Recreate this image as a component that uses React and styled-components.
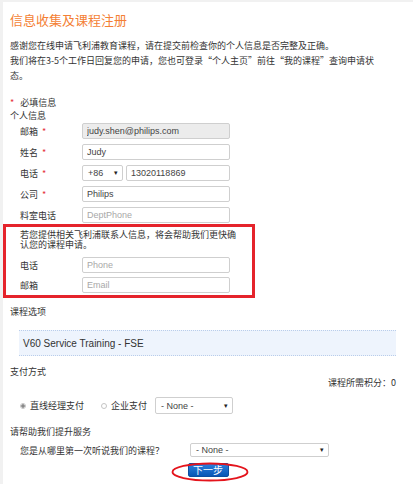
import React from 'react';
import styled, { createGlobalStyle } from 'styled-components';

const GlobalStyle = createGlobalStyle`
  body {
    margin: 0;
    background: #fff;
    font-family: "Noto Sans CJK SC", "Liberation Sans", sans-serif;
    color: #333;
  }
`;

const latin = `"Liberation Sans", "Noto Sans CJK SC", sans-serif`;

const Page = styled.div`
  border-top: 2px solid #f1f1f1;
  border-left: 3px solid #f1f1f1;
  min-height: 484px;
  box-sizing: border-box;
  font-size: 9px;
`;

const Title = styled.h1`
  margin: 10px 0 0;
  padding-left: 7px;
  font-size: 13px;
  line-height: 16px;
  font-weight: normal;
  color: #f47f35;
`;

const Intro = styled.p`
  margin: 10px 0 0;
  padding-left: 7px;
  line-height: 15px;
  span {
    display: block;
    white-space: nowrap;
  }
`;

const Heading = styled.div`
  margin-top: ${p => p.$gap || 0}px;
  padding-left: 7px;
  line-height: ${p => p.$lh || 13}px;
`;

const Star = styled.span`
  color: #e5323a;
  margin-right: ${p => p.$after || 0}px;
  margin-left: ${p => p.$before || 0}px;
`;

const FieldList = styled.div`
  display: flex;
  flex-direction: column;
  gap: ${p => p.$gap || 5}px;
  margin-top: ${p => p.$top || 0}px;
  padding-left: ${p => p.$indent || 0}px;
`;

const Row = styled.div`
  display: grid;
  grid-template-columns: 62px 148px;
  align-items: center;
  height: 16px;
`;

const Label = styled.span`
  white-space: nowrap;
`;

const Input = styled.input`
  box-sizing: border-box;
  width: ${p => p.$w || 148}px;
  height: 16px;
  margin: 0;
  padding: 0 4px;
  border: 1px solid #cfcfcf;
  border-radius: 2px;
  background: ${p => (p.$disabled ? '#ececec' : '#fff')};
  font-family: ${latin};
  font-size: 9px;
  color: #444;
  outline: none;
  &::placeholder {
    color: #a8a8a8;
  }
`;

const Pair = styled.div`
  display: flex;
  gap: 3px;
`;

const Select = styled.div`
  box-sizing: border-box;
  width: ${p => p.$w}px;
  height: ${p => p.$h || 16}px;
  margin-left: ${p => p.$ml || 0}px;
  display: flex;
  align-items: center;
  justify-content: space-between;
  padding: 0 4px 0 5px;
  border: 1px solid #cfcfcf;
  border-radius: 2px;
  background: #fff;
  font-family: ${latin};
  font-size: 9px;
  color: #444;
  &::after {
    content: '▾';
    font-size: 7px;
    color: #222;
  }
`;

const ContactBox = styled.div`
  box-sizing: border-box;
  width: 252px;
  margin-top: 1px;
  border: 3px solid #e5232b;
  padding: 3px 0 2px 14px;
`;

const Note = styled.p`
  margin: 0;
  line-height: 9.5px;
  width: 220px;
`;

const CourseBox = styled.div`
  box-sizing: border-box;
  width: 377px;
  height: 26px;
  margin: 12px 0 0 16px;
  padding-left: 4px;
  display: flex;
  align-items: center;
  background: #eef4fd;
  border-top: 1px dotted #b9cdeb;
  border-bottom: 1px dotted #b9cdeb;
  font-family: ${latin};
  font-size: 10px;
  color: #333;
`;

const Points = styled.div`
  text-align: right;
  padding-right: 17px;
  line-height: 11px;
`;

const RadioRow = styled.div`
  display: flex;
  align-items: center;
  height: 17px;
  margin-top: 9px;
  padding-left: 17px;
`;

const Radio = styled.span`
  box-sizing: border-box;
  width: 6px;
  height: 6px;
  margin: 0 4px 0 ${p => p.$ml || 0}px;
  border-radius: 50%;
  border: 1px solid #c4c4c4;
  background: ${p => (p.$checked ? 'radial-gradient(circle, #8a8a8a 0 1.5px, #fff 2px)' : '#fff')};
`;

const QuestionRow = styled.div`
  display: grid;
  grid-template-columns: 170px 139px;
  align-items: center;
  height: 14px;
  margin-top: 5px;
  padding-left: 17px;
`;

const Actions = styled.div`
  position: relative;
  display: flex;
  justify-content: center;
  margin-top: 6px;
`;

const NextButton = styled.button`
  width: 41px;
  height: 14px;
  margin: 0;
  padding: 0;
  border: 1px solid #0c4fa0;
  border-radius: 2px;
  background: linear-gradient(#2b7fdc, #0857b5);
  color: #fff;
  font-family: "Noto Sans CJK SC", sans-serif;
  font-size: 10px;
  line-height: 12px;
`;

const Ring = styled.svg`
  position: absolute;
  top: -1px;
  left: 50%;
  margin-left: -37px;
  pointer-events: none;
`;

const Field = ({ label, required, children }) => (
  <Row>
    <Label>
      {label}
      {required && <Star $before={4}>*</Star>}
    </Label>
    {children}
  </Row>
);

const App = () => (
  <Page>
    <GlobalStyle />
    <Title>信息收集及课程注册</Title>
    <Intro>
      <span>感谢您在线申请飞利浦教育课程，请在提交前检查你的个人信息是否完整及正确。</span>
      <span>我们将在3-5个工作日回复您的申请，您也可登录“个人主页”前往“我的课程”查询申请状</span>
      <span>态。</span>
    </Intro>

    <Heading $gap={13}>
      <Star $after={6}>*</Star>必填信息
    </Heading>
    <Heading>个人信息</Heading>

    <FieldList $top={1} $indent={17}>
      <Field label="邮箱" required>
        <Input $disabled readOnly defaultValue="judy.shen@philips.com" />
      </Field>
      <Field label="姓名" required>
        <Input readOnly defaultValue="Judy" />
      </Field>
      <Field label="电话" required>
        <Pair>
          <Select $w={42}>+86</Select>
          <Input $w={104} readOnly defaultValue="13020118869" />
        </Pair>
      </Field>
      <Field label="公司" required>
        <Input readOnly defaultValue="Philips" />
      </Field>
      <Field label="料室电话">
        <Input placeholder="DeptPhone" />
      </Field>
    </FieldList>

    <ContactBox>
      <Note>若您提供相关飞利浦联系人信息，将会帮助我们更快确认您的课程申请。</Note>
      <FieldList $top={8} $gap={4}>
        <Field label="电话">
          <Input placeholder="Phone" />
        </Field>
        <Field label="邮箱">
          <Input placeholder="Email" />
        </Field>
      </FieldList>
    </ContactBox>

    <Heading $gap={7}>课程选项</Heading>
    <CourseBox>V60 Service Training - FSE</CourseBox>

    <Heading $gap={10} $lh={11}>支付方式</Heading>
    <Points>课程所需积分：0</Points>
    <RadioRow>
      <Radio $checked />
      直线经理支付
      <Radio $ml={17} />
      企业支付
      <Select $w={78} $h={17} $ml={8}>- None -</Select>
    </RadioRow>

    <Heading $gap={12} $lh={12}>请帮助我们提升服务</Heading>
    <QuestionRow>
      <Label>您是从哪里第一次听说我们的课程？</Label>
      <Select $w={139} $h={14}>- None -</Select>
    </QuestionRow>

    <Actions>
      <NextButton>下一步</NextButton>
      <Ring width="78" height="20" viewBox="0 0 78 20">
        <ellipse cx="39" cy="10" rx="37.5" ry="8.5" fill="none" stroke="#e4141c" strokeWidth="1.8" />
      </Ring>
    </Actions>
  </Page>
);

export default App;
